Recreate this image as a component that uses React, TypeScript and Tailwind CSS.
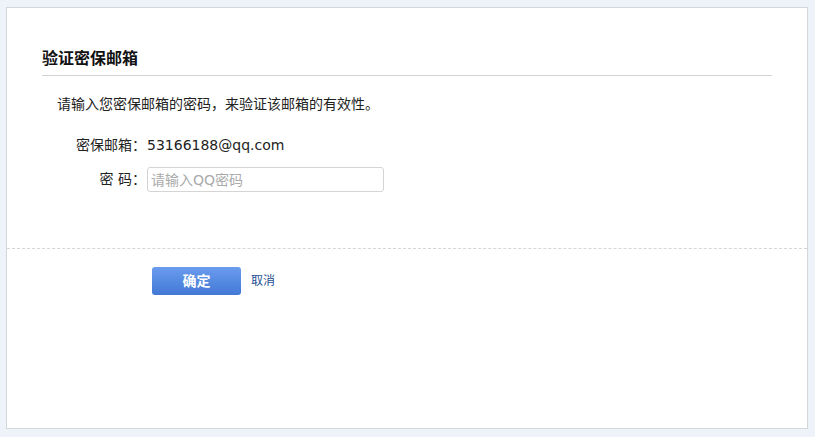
import React from 'react';

export default function App() {
  return (
    <div
      className="h-[437px] w-[815px] bg-[#edf3f9] pl-[6px] pt-[7px] pr-[7px] pb-[8px]"
      style={{ fontFamily: '"DejaVu Sans", "Noto Sans CJK SC", sans-serif' }}
    >
      <div className="h-full border border-[#d3d6da] bg-white flex flex-col">
        {/* 标题 */}
        <div className="mx-[35px] mt-[39px] border-b border-[#cfd2d6] pb-[4px]">
          <h2 className="text-[16px] leading-[24px] font-bold text-[#111]">验证密保邮箱</h2>
        </div>

        {/* 说明 */}
        <p className="mt-[18px] ml-[50px] text-[14px] leading-[20px] text-[#222]">
          请输入您密保邮箱的密码，来验证该邮箱的有效性。
        </p>

        {/* 表单 */}
        <div className="mt-[21px] flex items-center text-[14px] leading-[20px] text-[#222]">
          <span className="w-[90px] ml-[49px] text-right">密保邮箱：</span>
          <span className="ml-px">53166188@qq.com</span>
        </div>
        <div className="mt-[12px] flex items-center text-[14px] text-[#222]">
          <span className="w-[90px] ml-[49px] text-right">密 码：</span>
          <input
            type="password"
            placeholder="请输入QQ密码"
            className="ml-px h-[25px] w-[237px] rounded-[3px] border border-[#d4d4d4] px-[3px] text-[14px] placeholder:text-[#aaa] outline-none"
            style={{ fontFamily: '"DejaVu Sans", "Noto Sans CJK SC", sans-serif' }}
          />
        </div>

        {/* 操作 */}
        <div className="mt-[56px] border-t border-dashed border-[#d6d6d6]" />
        <div className="mt-[18px] flex items-center">
          <button className="ml-[145px] h-[28px] w-[89px] rounded-[3px] bg-gradient-to-b from-[#6a9cee] to-[#4279d6] text-[14px] font-bold text-white">
            确定
          </button>
          <a href="#" className="ml-[10px] text-[12px] text-[#1d4f91]">
            取消
          </a>
        </div>
      </div>
    </div>
  );
}
